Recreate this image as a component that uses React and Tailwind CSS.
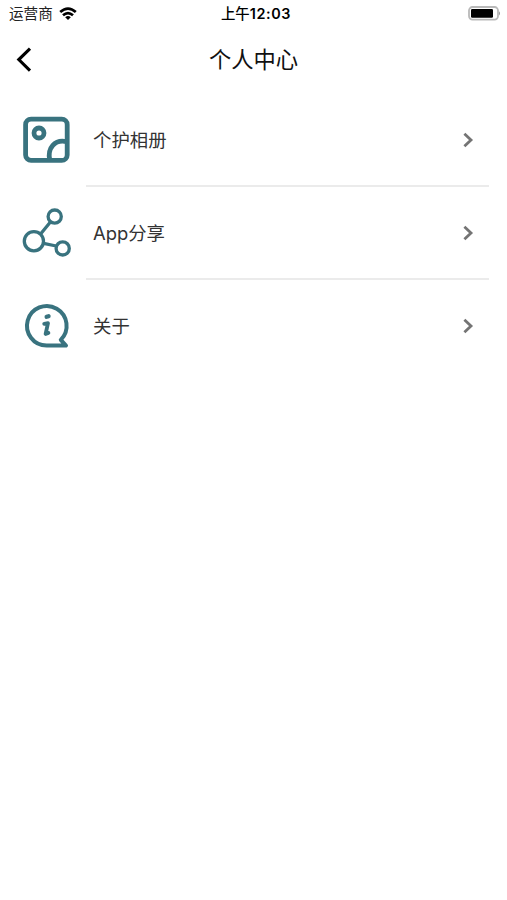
import React from "react";

function StatusBar() {
  return (
    <header className="flex h-7 items-center justify-between pr-[6px] pl-[9px] text-black">
      <div className="flex w-[120px] items-center gap-[6px]">
        <span className="text-[14.6px] leading-7 whitespace-nowrap text-[#222]">运营商</span>
        <svg width="18" height="14" viewBox="0 0 18 14" fill="none" stroke="currentColor" strokeWidth="2.7">
          <path d="M1.2 5Q9 -1.9 16.8 5" />
          <path d="M4 8.3Q9 4 14 8.3" />
          <path d="M6.2 10.2Q9 7.8 11.8 10.2L9 13Z" fill="currentColor" stroke="none" />
        </svg>
      </div>
      <span className="pl-[2px] text-[14.4px] leading-7 font-medium whitespace-nowrap">
        上午<span className="font-semibold tracking-[0.6px]">12:03</span>
      </span>
      <div className="flex w-[120px] justify-end pb-[2px]">
        <svg width="33" height="15" viewBox="0 0 33 15">
          <rect x="1" y="1" width="29" height="12.6" rx="3.5" fill="#fff" stroke="#b9b9b9" strokeWidth="1.8" />
          <rect x="3" y="3" width="22" height="8.8" rx="1.2" fill="#000" />
          <path d="M31 5.2Q33 7.3 31 9.4Z" fill="#999" />
        </svg>
      </div>
    </header>
  );
}

function AlbumIcon() {
  return (
    <svg width="50" height="50" viewBox="0 0 50 50" fill="none" stroke="#39737f" strokeWidth="4.8">
      <rect x="4.6" y="4.2" width="41.6" height="41.2" rx="5.5" />
      <circle cx="18" cy="18" r="5" />
      <path d="M45.5 26.6C34 24 26 33 28.8 45.3" />
    </svg>
  );
}

function ShareIcon() {
  return (
    <svg width="50" height="50" viewBox="0 0 50 50" fill="none" stroke="#39737f" strokeWidth="3.3">
      <circle cx="12.9" cy="33.2" r="9.6" />
      <circle cx="33.7" cy="8.6" r="6.6" />
      <circle cx="41.7" cy="40.4" r="6.6" />
      <path d="M19.6 26 29.2 14.2M22.6 35.4 35.2 38" />
    </svg>
  );
}

function AboutIcon() {
  return (
    <svg width="50" height="50" viewBox="0 0 50 50" fill="none" stroke="#39737f">
      <path d="M25.6 44.6A19.8 19.8 0 1 1 39.8 38.8L45 44.6Z" strokeWidth="4" strokeLinejoin="round" />
      <path d="M25.6 15.8 27.6 15.2" strokeWidth="4.2" strokeLinecap="round" />
      <path d="M23.2 22.8 27 22.2 24.6 33 27.4 32" strokeWidth="3.8" strokeLinecap="round" strokeLinejoin="round" />
    </svg>
  );
}

function MenuRow({ icon, label, divider }) {
  return (
    <li className="flex h-[93px] pl-[21px]">
      <div className="flex w-[65px] items-center pb-[2px]">{icon}</div>
      <div
        className={`flex w-[403px] items-center justify-between pr-[15px] pl-[7px] border-b-2 ${divider ? "border-[#ebebeb]" : "border-transparent"}`}
      >
        <span className="text-[18.4px] leading-7 text-[#333]">{label}</span>
        <svg width="12" height="16" viewBox="0 0 12 16" fill="none" stroke="#747474" strokeWidth="2.8">
          <path d="M2.4 1.8 9 8 2.4 14.2" />
        </svg>
      </div>
    </li>
  );
}

export default function App() {
  return (
    <div className="min-h-[900px] w-[507px] bg-white font-['Inter','Noto_Sans_CJK_SC',sans-serif]">
      <StatusBar />
      <nav className="flex h-[66px] items-center justify-between px-4 pb-[2px]">
        <svg width="20" height="26" viewBox="0 0 20 26" fill="none" stroke="#000" strokeWidth="3.1">
          <path d="M14 1.6 2.8 12.6 14 23.6" />
        </svg>
        <h1 className="text-[22.3px] leading-8 text-[#111]">个人中心</h1>
        <div className="w-5" />
      </nav>
      <ul>
        <MenuRow icon={<AlbumIcon />} label="个护相册" divider />
        <MenuRow icon={<ShareIcon />} label="App分享" divider />
        <MenuRow icon={<AboutIcon />} label="关于" />
      </ul>
    </div>
  );
}
